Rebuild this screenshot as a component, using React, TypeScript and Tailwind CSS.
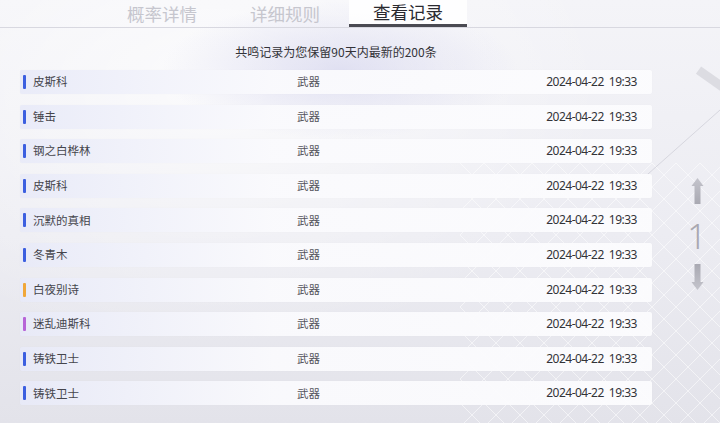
import React from "react";

const rows = [
  { name: "皮斯科", color: "#3c5fe0" },
  { name: "锤击", color: "#3c5fe0" },
  { name: "钢之白桦林", color: "#3c5fe0" },
  { name: "皮斯科", color: "#3c5fe0" },
  { name: "沉默的真相", color: "#3c5fe0" },
  { name: "冬青木", color: "#3c5fe0" },
  { name: "白夜别诗", color: "#f0a73a" },
  { name: "迷乱迪斯科", color: "#b765d8" },
  { name: "铸铁卫士", color: "#3c5fe0" },
  { name: "铸铁卫士", color: "#3c5fe0" },
];

function Arrow({ down }: { down?: boolean }) {
  return (
    <svg width="13" height="28" viewBox="0 0 13 28" style={{ transform: down ? "rotate(180deg)" : undefined }}>
      <defs>
        <linearGradient id={down ? "ad" : "au"} x1="0" y1="0" x2="0" y2="1">
          <stop offset="0" stopColor="#c4c4cc" />
          <stop offset="1" stopColor="#a9a9b2" />
        </linearGradient>
      </defs>
      <path d="M6.5 1 L12.5 9 L9.5 9 L9.5 27 L3.5 27 L3.5 9 L0.5 9 Z" fill={`url(#${down ? "ad" : "au"})`} />
    </svg>
  );
}

export default function App() {
  return (
    <div
      className="relative w-[720px] h-[423px] overflow-hidden"
      style={{ fontFamily: '"Noto Sans CJK SC", "Noto Sans", sans-serif' }}
    >
      {/* background */}
      <div className="absolute inset-0 bg-[linear-gradient(180deg,#f4f4f8_0%,#ececf2_55%,#e3e3ea_100%)]" />
      <div className="absolute inset-0 bg-[radial-gradient(ellipse_at_30%_20%,rgba(255,255,255,0.7),rgba(255,255,255,0)_55%)]" />
      <div className="absolute left-[160px] top-0 w-[360px] h-[140px] bg-[radial-gradient(ellipse_at_center,rgba(205,205,235,0.55),rgba(205,205,235,0)_70%)]" />
      <svg className="absolute right-0 bottom-0" width="260" height="260" viewBox="0 0 260 260">
        <defs>
          <pattern id="lat" width="24" height="24" patternUnits="userSpaceOnUse">
            <path d="M0 0 L24 24 M24 0 L0 24" stroke="#ffffff" strokeOpacity="0.55" strokeWidth="1" />
          </pattern>
        </defs>
        <rect width="260" height="260" fill="url(#lat)" />
      </svg>
      <div className="absolute left-[694px] top-[80px] w-[50px] h-[9px] bg-[#dcdce2] rotate-[35deg]" />
      <svg className="absolute left-[630px] top-[100px]" width="90" height="90" viewBox="0 0 90 90">
        <path d="M0 90 L90 10" stroke="#d6d6de" strokeWidth="1" />
      </svg>

      <div className="relative flex flex-col h-full">
        {/* tabs */}
        <div className="relative h-[28px] flex border-b border-[#d8d8e0]">
          <div className="flex h-full ml-[101px]">
            <div className="w-[122px] h-full flex items-center justify-center text-[17.5px] text-[#c6c6ce] leading-none">概率详情</div>
            <div className="w-[124px] h-full flex items-center justify-center text-[17.5px] text-[#c6c6ce] leading-none">详细规则</div>
            <div className="ml-[2px] w-[118px] h-full flex items-center justify-center text-[17.5px] text-[#2a2a30] leading-none bg-[rgba(255,255,255,0.85)] border-b-[3px] border-[#4a4a52]">查看记录</div>
          </div>
        </div>

        <div className="flex">
          <div className="flex flex-col ml-[20px] w-[632px]">
            <div className="mt-[16px] h-[16px] flex items-center justify-center text-[12px] text-[#333338] leading-none">
              共鸣记录为您保留90天内最新的200条
            </div>
            <div className="flex flex-col gap-[10.6px] mt-[10px]">
              {rows.map((r, i) => (
                <div
                  key={i}
                  className="h-[24px] flex items-center rounded-[2px] bg-[linear-gradient(90deg,rgba(232,234,248,0.9)_0%,rgba(250,250,253,0.95)_40%,rgba(252,252,254,0.95)_100%)] shadow-[0_0_1px_rgba(0,0,0,0.06)]"
                >
                  <div className="w-[3px] h-[14px] rounded-[1px] ml-[3px]" style={{ background: r.color }} />
                  <div className="ml-[7px] w-[264px] text-[11.5px] text-[#45454c] leading-none">{r.name}</div>
                  <div className="text-[11.5px] text-[#55555c] leading-none">武器</div>
                  <div
                    className="ml-auto mr-[15px] flex gap-[5px] text-[12px] tracking-[-0.5px] text-[#333338] leading-none"
                    style={{ fontFamily: '"Noto Sans", sans-serif' }}
                  >
                    <span>2024-04-22</span>
                    <span>19:33</span>
                  </div>
                </div>
              ))}
            </div>
          </div>
          <div className="flex-1 flex flex-col items-center pt-[149px] pl-[22px]">
            <Arrow />
            <div className="text-[34px] leading-none text-[#a8a8b0] mt-[14px] font-light" style={{ fontFamily: '"Noto Sans", sans-serif' }}>1</div>
            <div className="mt-[10px]"><Arrow down /></div>
          </div>
        </div>
      </div>
    </div>
  );
}
